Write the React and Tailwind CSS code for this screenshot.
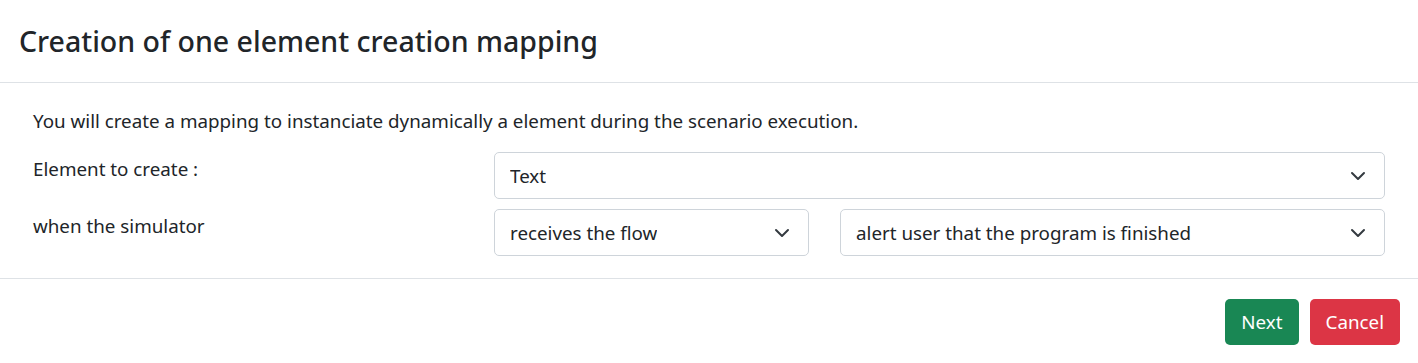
import React from 'react';

const Chevron = () => (
  <svg viewBox="0 0 16 16" className="h-[16px] w-[16px] shrink-0" fill="none" stroke="#343a40" strokeWidth="2" strokeLinecap="round" strokeLinejoin="round">
    <path d="m2 5 6 6 6-6" />
  </svg>
);

const FakeSelect = ({ value, className = '' }) => (
  <div className={`flex h-[47px] items-center justify-between rounded-[5px] border border-[#ced4da] bg-white pl-[15px] pr-[18px] ${className}`}>
    <span className="truncate">{value}</span>
    <Chevron />
  </div>
);

const FormRow = ({ label, children }) => (
  <div className="flex items-start">
    <div className="w-[461px] shrink-0 pt-[3px] leading-[1.5]">{label}</div>
    <div className="flex flex-1 gap-[31px]">{children}</div>
  </div>
);

export default function App() {
  return (
    <div className="min-h-[363px] w-full bg-white text-[18.8px] text-[#212529]" style={{ fontFamily: '"Noto Sans", "Open Sans", sans-serif' }}>
      <div className="flex h-[83px] items-center border-b border-[#dee2e6] px-[19px]">
        <h4 className="text-[28.5px] font-medium leading-[1.2]">Creation of one element creation mapping</h4>
      </div>

      <div className="border-b border-[#dee2e6] px-[33px] pb-[22px]">
        <p className="pt-[24px] leading-[1.5]">You will create a mapping to instanciate dynamically a element during the scenario execution.</p>
        <div className="mt-[17px] flex flex-col gap-[10px]">
          <FormRow label="Element to create :">
            <FakeSelect value="Text" className="flex-1" />
          </FormRow>
          <FormRow label="when the simulator">
            <FakeSelect value="receives the flow" className="w-[315px]" />
            <FakeSelect value="alert user that the program is finished" className="flex-1" />
          </FormRow>
        </div>
      </div>

      <div className="flex justify-end gap-[11px] pl-[18px] pr-[18px] pt-[20px] pb-[18px]">
        <button type="button" className="h-[46px] rounded-[5px] bg-[#198754] px-[16px] text-white">Next</button>
        <button type="button" className="h-[46px] rounded-[5px] bg-[#dc3545] px-[16px] text-white">Cancel</button>
      </div>
    </div>
  );
}
